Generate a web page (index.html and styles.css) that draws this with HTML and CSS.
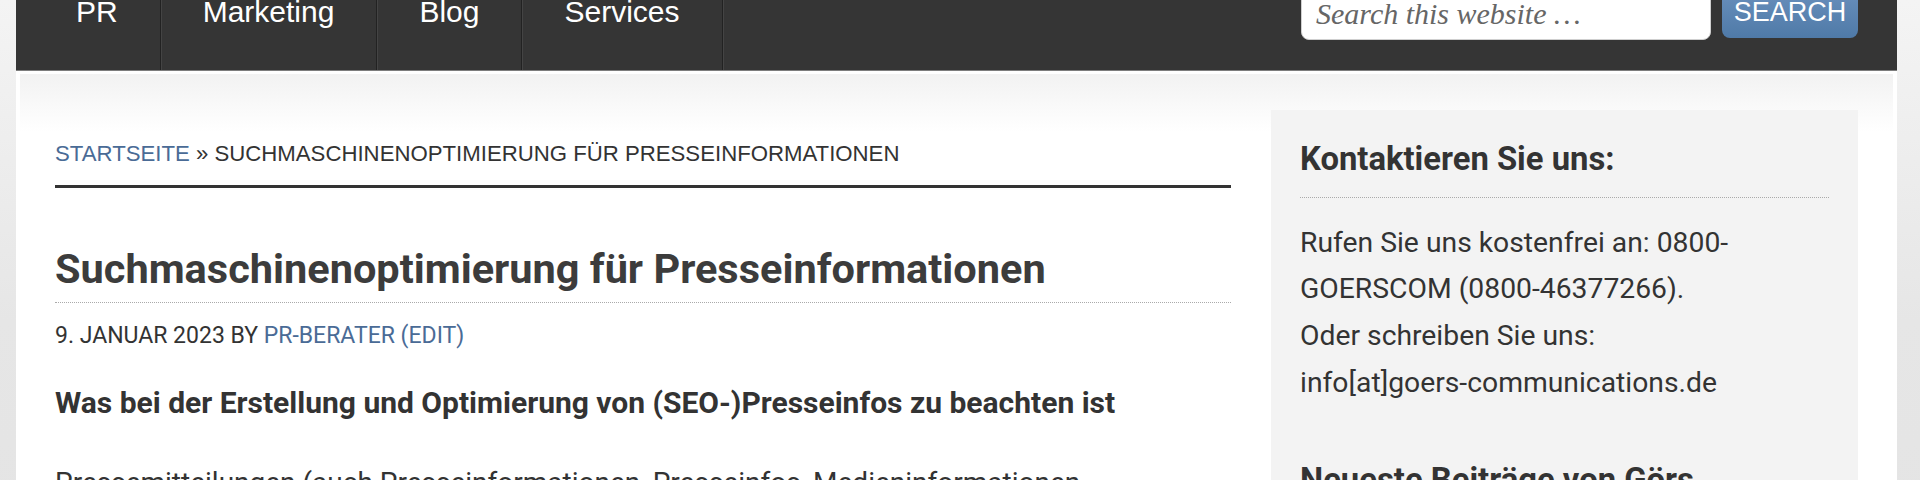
FILE: index.html
```html
<!DOCTYPE html>
<html lang="de">
  <head>
    <meta charset="UTF-8" />
    <meta name="viewport" content="width=device-width, initial-scale=1.0" />
    <title>Suchmaschinenoptimierung für Presseinformationen</title>
    <link rel="stylesheet" href="styles.css">
  </head>
  <body>
    <div class="site-container">
      <nav class="nav-primary">
        <ul class="menu">
          <li class="menu-item"><a href="#">PR</a></li>
          <li class="menu-item"><a href="#">Marketing</a></li>
          <li class="menu-item"><a href="#">Blog</a></li>
          <li class="menu-item"><a href="#">Services</a></li>
        </ul>
        <form class="search-form">
          <input class="search-input" type="search" placeholder="Search this website …" />
          <button class="search-button" type="button">SEARCH</button>
        </form>
      </nav>

      <div class="site-inner">
        <div class="content-sidebar-wrap">
          <main class="content">
            <div class="breadcrumb">
              <a href="#">STARTSEITE</a> » SUCHMASCHINENOPTIMIERUNG FÜR PRESSEINFORMATIONEN
            </div>
            <article class="entry">
              <h1 class="entry-title">Suchmaschinenoptimierung für Presseinformationen</h1>
              <p class="entry-meta">9. Januar 2023 by <a href="#">PR-Berater</a> <a href="#">(Edit)</a></p>
              <h3 class="entry-subtitle">Was bei der Erstellung und Optimierung von (SEO-)Presseinfos zu beachten ist</h3>
              <p class="entry-text">Pressemitteilungen (auch Presseinformationen, Presseinfos, Medieninformationen, Pressemeldungen) sind ein wichtiges Instrument der Öffentlichkeitsarbeit.</p>
            </article>
          </main>

          <aside class="sidebar">
            <section class="widget">
              <h4 class="widget-title">Kontaktieren Sie uns:</h4>
              <p class="widget-text">Rufen Sie uns kostenfrei an: 0800-GOERSCOM (0800-46377266).<br>Oder schreiben Sie uns:<br>info[at]goers-communications.de</p>
            </section>
            <section class="widget">
              <h4 class="widget-title widget-title-plain">Neueste Beiträge von Görs Communications</h4>
            </section>
          </aside>
        </div>
      </div>
    </div>
  </body>
</html>
```

FILE: styles.css
```css
body {
  margin: 0;
  padding: 0;
  font-family: Roboto, 'Liberation Sans', sans-serif;
  color: #333;
  background: linear-gradient(to bottom, #f4f4f4 0, #e6e6e6 320px, #e4e4e4 100%);
  min-height: 480px;
}
a {
  color: #4a6b96;
  text-decoration: none;
}
.site-container {
  margin-left: 16px;
  width: 1881px;
}

/* navigation, scrolled a bit out of view */
.nav-primary {
  display: flex;
  justify-content: space-between;
  height: 101px;
  margin-top: -30px;
  box-sizing: border-box;
  background-color: #353535;
  border-bottom: 1px solid #7d7d7d;
  padding: 0 39px 0 18px;
}
.menu {
  display: flex;
  margin: 0;
  padding: 0;
  list-style: none;
}
.menu-item {
  border-right: 1px solid #222;
  box-shadow: 1px 0 0 #444;
}
.menu-item a {
  display: block;
  padding: 27px 42px 0;
  font-family: 'Liberation Sans', Arial, sans-serif;
  font-size: 30px;
  line-height: 30px;
  color: #fff;
}
.search-form {
  display: flex;
  align-items: flex-start;
  gap: 11px;
}
.search-input {
  width: 410px;
  height: 58px;
  margin-top: 12px;
  box-sizing: border-box;
  padding: 6px 14px 0;
  border: 1px solid #cfcfcf;
  border-radius: 8px;
  background: #fff;
  font-family: 'Liberation Serif', Georgia, serif;
  font-style: italic;
  font-size: 30px;
  color: #666;
}
.search-input::placeholder {
  color: #666;
}
.search-button {
  width: 136px;
  height: 54px;
  margin-top: 14px;
  padding: 3px 0 0;
  border: none;
  border-radius: 8px;
  background: linear-gradient(to bottom, #6c92be, #4f7aa8);
  color: #fff;
  font-family: 'Liberation Sans', Arial, sans-serif;
  font-size: 27px;
}

/* main area */
.site-inner {
  background-color: #fff;
  padding-top: 3px;
  min-height: 420px;
}
.content-sidebar-wrap {
  display: flex;
  gap: 40px;
  margin: 0 4px;
  padding: 36px 35px 0;
  background: linear-gradient(to bottom, #f2f2f2 0, #fff 58px);
}
.content {
  width: 1176px;
}
.breadcrumb {
  margin-top: 27px;
  padding-bottom: 15px;
  border-bottom: 3px solid #333;
  font-family: 'Liberation Sans', Arial, sans-serif;
  font-size: 22.2px;
  line-height: 33px;
  color: #333;
}
.entry-title {
  margin: 56px 0 0;
  padding-bottom: 8px;
  border-bottom: 1px dotted #aaa;
  font-size: 41.5px;
  line-height: 50px;
  font-weight: 700;
  color: #3c3c3c;
}
.entry-meta {
  margin: 16px 0 0;
  font-size: 23px;
  line-height: 34px;
  text-transform: uppercase;
  color: #333;
}
.entry-subtitle {
  margin: 27px 0 0;
  font-size: 30px;
  line-height: 45px;
  font-weight: 700;
  color: #333;
}
.entry-text {
  margin: 35px 0 0;
  font-size: 28px;
  line-height: 46.7px;
}

/* sidebar */
.sidebar {
  width: 587px;
  box-sizing: border-box;
  padding: 29px 29px 0;
  background-color: #f3f3f3;
  min-height: 380px;
}
.widget-title {
  margin: 0;
  padding-bottom: 16px;
  border-bottom: 1px dotted #aaa;
  font-size: 32.8px;
  line-height: 41.6px;
  font-weight: 700;
  color: #333;
}
.widget-title-plain {
  border-bottom: none;
}
.widget-text {
  margin: 22px 0 54px;
  font-size: 28.3px;
  line-height: 46.7px;
  color: #333;
}
```
